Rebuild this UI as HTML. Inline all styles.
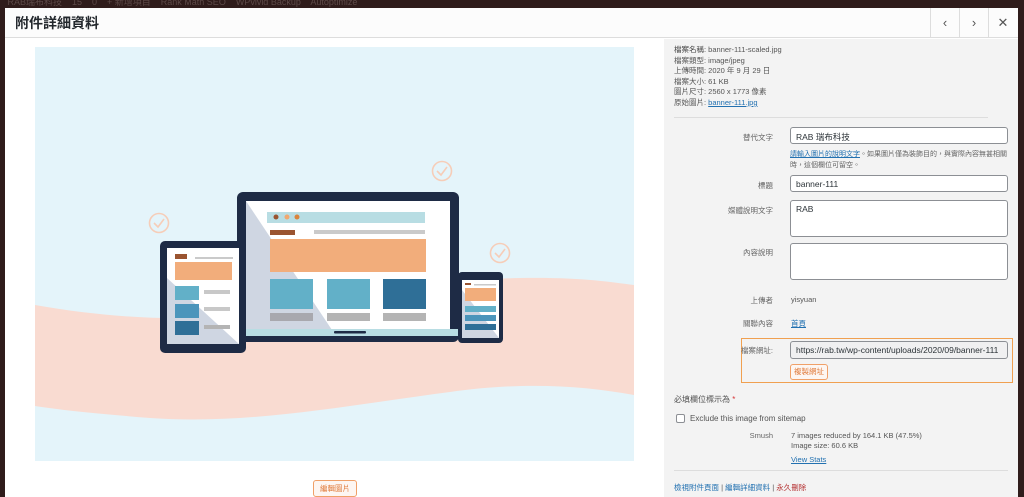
<!DOCTYPE html>
<html><head><meta charset="utf-8"><style>
*{margin:0;padding:0;box-sizing:border-box}
body{width:1024px;height:497px;overflow:hidden;background:#2f1c1b;font-family:"Liberation Sans","Noto Sans CJK TC",sans-serif;position:relative}
.adm{position:absolute;top:0;left:0;right:0;height:8px;color:#5d4a48;font-size:9px;line-height:4px;white-space:nowrap;overflow:hidden}
.modal{position:absolute;left:5px;top:8px;width:1013px;height:489px;background:#fff}
.hdr{position:absolute;left:0;top:0;right:0;height:30px;border-bottom:1px solid #ddd;background:#fcfcfc}
.hdr h1{position:absolute;left:10px;top:5px;font-size:14px;font-weight:bold;color:#23282d}
.nb{position:absolute;top:0;width:29px;height:30px;border-left:1px solid #ddd;color:#555;font-size:13px;text-align:center;line-height:29px}
.left{position:absolute;left:0;top:31px;width:659px;bottom:0;background:#fff}
.right{position:absolute;left:659px;top:31px;right:0;bottom:0;background:#f3f3f3;font-size:7.5px;color:#555}
.t{position:absolute;white-space:nowrap}
.lbl{position:absolute;right:245px;text-align:right;color:#666;white-space:nowrap}
.inp{position:absolute;left:126px;width:218px;background:#fff;border:1px solid #8c8f94;border-radius:3px;font-size:8.5px;color:#2c3338;padding:3px 5px;white-space:nowrap;overflow:hidden}
a{color:#2271b1;text-decoration:underline}
.btn{position:absolute;border:1px solid #f0a068;color:#e07a3a;background:#fdf6f2;border-radius:3px;font-size:7.5px;text-align:center}
</style></head><body>
<div class="adm">&nbsp;&nbsp;&nbsp;RAB瑞布科技 &nbsp;&nbsp; 15 &nbsp;&nbsp; 0 &nbsp;&nbsp; + 新增項目 &nbsp;&nbsp; Rank Math SEO &nbsp;&nbsp; WPvivid Backup &nbsp;&nbsp; Autoptimize</div>
<div class="modal">
<div class="hdr"><h1>附件詳細資料</h1>
<div class="nb" style="left:925px">&#8249;</div><div class="nb" style="left:954px">&#8250;</div><div class="nb" style="left:983px">&#10005;</div></div>
<div class="left">
<svg width="659" height="458" viewBox="5 39 659 458" style="position:absolute;left:0;top:0">
<rect x="35" y="47" width="599" height="414" fill="#e4f4fa"/>
<path d="M35 305 C120 320 200 322 260 312 C350 298 420 280 520 278 C580 277 610 282 634 285 L634 395 C580 385 520 382 450 392 C350 405 250 425 150 418 C100 414 60 410 35 406 Z" fill="#f9dbd1"/>
<g fill="none" stroke="#f6cdb8" stroke-width="1.6"><circle cx="442" cy="171" r="9.5"/><circle cx="159" cy="223" r="9.5"/><circle cx="500" cy="253" r="9.5"/>
<path d="M437 171l4 4 6-8M154 223l4 4 6-8M495 253l4 4 6-8"/></g>
<rect x="237" y="192" width="222" height="150" rx="6" fill="#1e2b45"/>
<rect x="246" y="201" width="204" height="129" fill="#fff"/>
<polygon points="246,201 332,330 246,330" fill="#cfd6e2"/>
<rect x="267" y="212" width="158" height="11" fill="#b8dde3"/>
<circle cx="276" cy="217" r="2.5" fill="#9a5430"/><circle cx="287" cy="217" r="2.5" fill="#f0a870"/><circle cx="297" cy="217" r="2.5" fill="#d9843d"/>
<rect x="270" y="230" width="25" height="5" fill="#9a5430"/><rect x="314" y="230" width="111" height="4" fill="#cacaca"/>
<rect x="270" y="239" width="156" height="33" fill="#f2ad7b"/>
<rect x="270" y="279" width="43" height="30" fill="#62b0c8"/><rect x="327" y="279" width="43" height="30" fill="#62b0c8"/><rect x="383" y="279" width="43" height="30" fill="#2f6f97"/>
<rect x="270" y="313" width="43" height="8" fill="#a8a8ae"/><rect x="327" y="313" width="43" height="8" fill="#b4b4b4"/><rect x="383" y="313" width="43" height="8" fill="#b4b4b4"/>
<rect x="246" y="329" width="225" height="7" fill="#b8dde3"/><rect x="334" y="331" width="32" height="2.5" rx="1" fill="#1e2b45"/>
<rect x="160" y="241" width="86" height="112" rx="5" fill="#1e2b45"/>
<rect x="167" y="248" width="72" height="96" fill="#fff"/>
<polygon points="167,278 239,344 167,344" fill="#cfd6e2"/>
<rect x="175" y="254" width="12" height="5" fill="#9a5430"/><rect x="195" y="257" width="38" height="2" fill="#cacaca"/>
<rect x="175" y="262" width="57" height="18" fill="#f2ad7b"/>
<rect x="175" y="286" width="24" height="14" fill="#62b0c8"/><rect x="175" y="304" width="24" height="14" fill="#4b95bb"/><rect x="175" y="321" width="24" height="14" fill="#2f6f97"/>
<rect x="204" y="290" width="26" height="4" fill="#c8c8c8"/><rect x="204" y="307" width="26" height="4" fill="#c8c8c8"/><rect x="204" y="325" width="26" height="4" fill="#b4b4b4"/>
<rect x="458" y="272" width="45" height="71" rx="4" fill="#1e2b45"/>
<rect x="462" y="280" width="37" height="58" fill="#fff"/>
<polygon points="462,290 499,338 462,338" fill="#cfd6e2"/>
<rect x="465" y="283" width="6" height="2" fill="#9a5430"/><rect x="474" y="284" width="22" height="1.5" fill="#cacaca"/>
<rect x="465" y="288" width="31" height="13" fill="#f2ad7b"/>
<rect x="465" y="306" width="31" height="6" fill="#62b0c8"/><rect x="465" y="315" width="31" height="6" fill="#4b95bb"/><rect x="465" y="324" width="31" height="6" fill="#2f6f97"/>
</svg>
<div class="btn" style="left:308px;top:441px;width:44px;height:17px;line-height:15px">編輯圖片</div>
</div>
<div class="right">
<div class="t" style="left:10px;top:6px;line-height:10.6px"><span style="color:#444">檔案名稱:</span> banner-111-scaled.jpg<br>檔案類型: image/jpeg<br>上傳時間: 2020 年 9 月 29 日<br>檔案大小: 61 KB<br>圖片尺寸: 2560 x 1773 像素<br>原始圖片: <a>banner-111.jpg</a></div>
<div style="position:absolute;left:10px;top:78px;width:314px;border-top:1px solid #ddd"></div>
<div class="lbl" style="top:93px">替代文字</div><div class="inp" style="top:88px;height:17px">RAB 瑞布科技</div>
<div class="t" style="left:126px;top:110px;line-height:11px;color:#666;font-size:7px"><a>請輸入圖片的說明文字</a>。如果圖片僅為裝飾目的，與實際內容無甚相關<br>時，這個欄位可留空。</div>
<div class="lbl" style="top:141px">標題</div><div class="inp" style="top:136px;height:17px">banner-111</div>
<div class="lbl" style="top:166px">媒體說明文字</div><div class="inp" style="top:161px;height:37px">RAB</div>
<div class="lbl" style="top:208px">內容說明</div><div class="inp" style="top:204px;height:37px"></div>
<div class="lbl" style="top:256px">上傳者</div><div class="t" style="left:127px;top:256px">yisyuan</div>
<div class="lbl" style="top:279px">關聯內容</div><div class="t" style="left:127px;top:279px"><a>首頁</a></div>
<div style="position:absolute;left:77px;top:299px;width:272px;height:45px;border:1.5px solid #f0a050"></div>
<div class="lbl" style="top:306px">檔案網址:</div><div class="inp" style="top:302px;height:18px;background:#f0f0f1;color:#2c3338">https://rab.tw/wp-content/uploads/2020/09/banner-111</div>
<div class="btn" style="left:126px;top:325px;width:38px;height:16px;line-height:14px">複製網址</div>
<div class="t" style="left:10px;top:355px;font-size:8px;color:#555">必填欄位標示為 <span style="color:#d63638">*</span></div>
<div style="position:absolute;left:12px;top:375px;width:9px;height:9px;border:1px solid #8c8f94;border-radius:2px;background:#fff"></div>
<div class="t" style="left:26px;top:375px;font-size:8px;color:#555">Exclude this image from sitemap</div>
<div class="lbl" style="top:392px">Smush</div>
<div class="t" style="left:127px;top:392px;line-height:9.5px">7 images reduced by 164.1 KB (47.5%)<br>Image size: 60.6 KB</div>
<div class="t" style="left:127px;top:416px"><a>View Stats</a></div>
<div style="position:absolute;left:10px;top:431px;width:334px;border-top:1px solid #ddd"></div>
<div class="t" style="left:10px;top:443px"><a style="text-decoration:none">檢視附件頁面</a> | <a style="text-decoration:none">編輯詳細資料</a> | <span style="color:#b32d2e">永久刪除</span></div>
</div>
</div>
</body></html>
